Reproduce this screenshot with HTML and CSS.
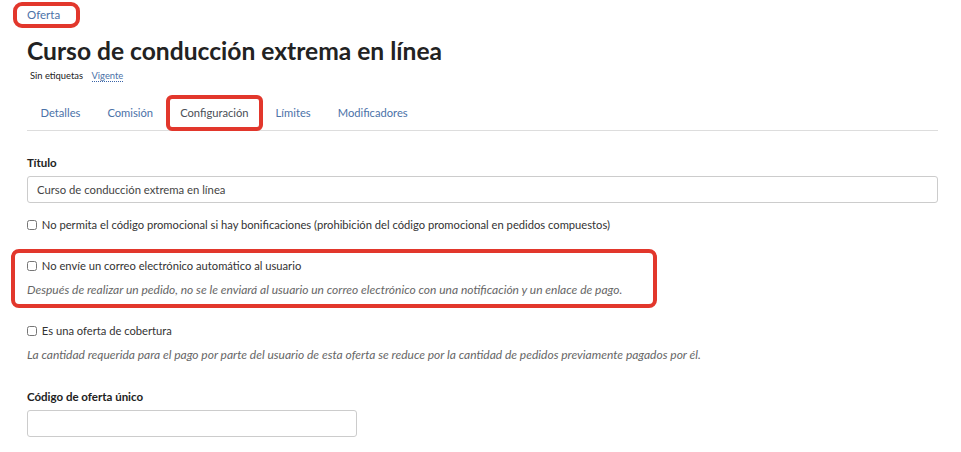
FILE: index.html
```html
<!DOCTYPE html>
<html>
  <head>
    <meta charset="UTF-8">
    <title>Oferta</title>
    <link rel="stylesheet" href="styles.css">
  </head>
  <body>
    <div class="page">
      <div class="crumbs">
        <a href="#" class="crumb marked">Oferta</a>
      </div>
      <h1 class="title">Curso de conducción extrema en línea</h1>
      <div class="meta">
        <span class="tags">Sin etiquetas</span>
        <a href="#" class="status">Vigente</a>
      </div>
      <ul class="tabs">
        <li><a href="#">Detalles</a></li>
        <li><a href="#">Comisión</a></li>
        <li class="active marked"><a href="#">Configuración</a></li>
        <li><a href="#">Límites</a></li>
        <li><a href="#">Modificadores</a></li>
      </ul>

      <form class="settings">
        <div class="field">
          <label class="field-label" for="title">Título</label>
          <input type="text" id="title" class="text-input" value="Curso de conducción extrema en línea">
        </div>

        <div class="option">
          <label><input type="checkbox"> No permita el código promocional si hay bonificaciones (prohibición del código promocional en pedidos compuestos)</label>
        </div>

        <div class="option marked-block">
          <label><input type="checkbox"> No envíe un correo electrónico automático al usuario</label>
          <p class="hint">Después de realizar un pedido, no se le enviará al usuario un correo electrónico con una notificación y un enlace de pago.</p>
        </div>

        <div class="option">
          <label><input type="checkbox"> Es una oferta de cobertura</label>
          <p class="hint">La cantidad requerida para el pago por parte del usuario de esta oferta se reduce por la cantidad de pedidos previamente pagados por él.</p>
        </div>

        <div class="field code-field">
          <label class="field-label" for="code">Código de oferta único</label>
          <input type="text" id="code" class="text-input short">
        </div>
      </form>
    </div>
  </body>
</html>
```

FILE: styles.css
```css
body {
  margin: 0;
  font-family: Lato, "Open Sans", sans-serif;
  font-size: 11.2px;
  color: #333;
  background: #fff;
}
a {
  text-decoration: none;
  color: #4b72a8;
}
.page {
  padding: 6px 23px 0 27px;
}
.marked {
  outline: 4px solid #e2372c;
  border-radius: 5px;
}
.crumbs {
  height: 17px;
}
.crumb {
  display: inline-block;
  line-height: 16px;
  margin-left: -10px;
  padding: 1px 16px 1px 10px;
  font-size: 11.5px;
}
.title {
  margin: 13px 0 0;
  font-size: 24.6px;
  font-weight: 700;
  color: #222;
  line-height: 30px;
}
.meta {
  margin-top: 3px;
  padding-left: 3px;
  font-size: 9.4px;
  line-height: 14px;
}
.tags {
  color: #222;
}
.status {
  margin-left: 6px;
  border-bottom: 1px dotted #3a64a8;
}
.tabs {
  display: flex;
  list-style: none;
  margin: 13px 0 0;
  padding: 0;
  border-bottom: 1px solid #ddd;
}
.tabs li {
  padding: 9px 13.5px 10px;
  line-height: 15px;
  font-size: 11.2px;
}
.tabs li.marked {
  outline-offset: -3px;
}
.tabs a {
  color: #4b72a8;
}
.tabs .active a {
  color: #4a4f57;
}
.settings {
  padding-top: 24px;
}
.field-label {
  display: block;
  font-weight: 700;
  font-size: 11.5px;
  color: #222;
  line-height: 16px;
  margin-bottom: 5px;
}
.text-input {
  display: block;
  box-sizing: border-box;
  width: 100%;
  height: 27px;
  padding: 0 9px;
  border: 1px solid #ccc;
  border-radius: 3px;
  font-family: inherit;
  font-size: 11.3px;
  color: #444;
}
.text-input.short {
  width: 330px;
}
.option {
  margin-top: 14px;
  line-height: 16px;
  color: #333;
}
.option input {
  margin: 0 2px 0 0;
  width: 10px;
  height: 10px;
  vertical-align: -1px;
}
.hint {
  margin: 8px 0 0;
  font-style: italic;
  font-size: 12px;
  color: #666;
  line-height: 16px;
}
.marked-block {
  box-sizing: border-box;
  width: 638px;
  margin: 20px 0 0 -12px;
  padding: 5px 12px 6px;
  outline: 4px solid #e2372c;
  border-radius: 4px;
}
.marked-block + .option {
  margin-top: 19px;
}
.code-field {
  margin-top: 26px;
}
```
